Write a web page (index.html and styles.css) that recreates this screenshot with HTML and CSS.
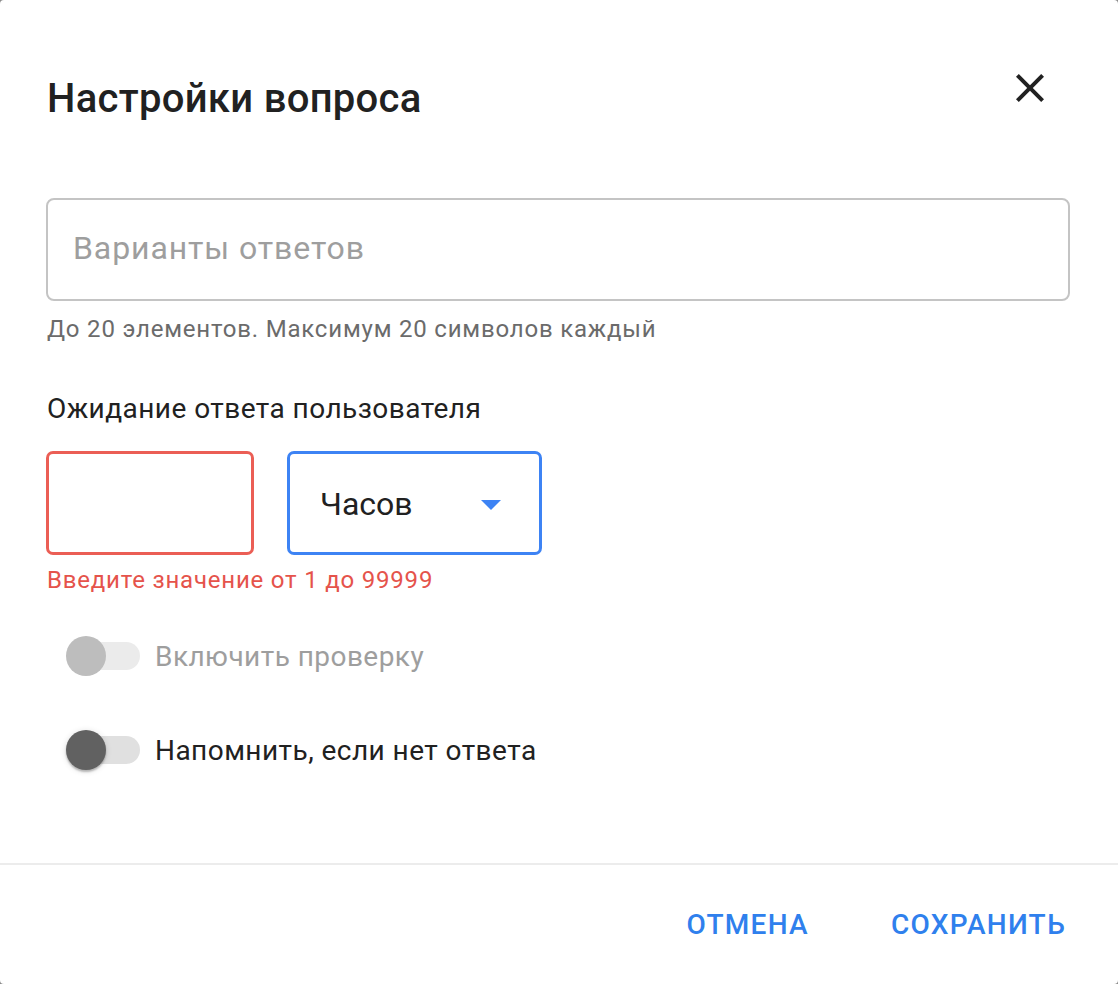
FILE: index.html
```html
<!DOCTYPE html>
<html lang="ru">
<head>
    <meta charset="UTF-8">
    <meta name="viewport" content="width=device-width, initial-scale=1.0">
    <title>Настройки вопроса</title>
    <link rel="stylesheet" href="styles.css">
</head>
<body>
<div class="dialog">
    <div class="dialog-title">
        <h2>Настройки вопроса</h2>
        <button type="button" class="close" aria-label="Закрыть">
            <svg viewBox="0 0 24 24" width="48" height="48">
                <path d="M19 6.41L17.59 5 12 10.59 6.41 5 5 6.41 10.59 12 5 17.59 6.41 19 12 13.41 17.59 19 19 17.59 13.41 12z"/>
            </svg>
        </button>
    </div>

    <div class="dialog-content">
        <div class="answers">
            <input type="text" id="answers" placeholder="Варианты ответов">
        </div>
        <p class="helper">До 20 элементов. Максимум 20 символов каждый</p>

        <p class="group-label">Ожидание ответа пользователя</p>
        <div class="wait-row">
            <div class="field field-error">
                <input type="text" id="waitValue">
            </div>
            <div class="field field-select">
                <span>Часов</span>
                <svg viewBox="0 0 24 24" width="48" height="48"><path d="M7 10l5 5 5-5z"/></svg>
            </div>
        </div>
        <p class="error">Введите значение от 1 до 99999</p>

        <label class="switch-row disabled">
            <span class="switch"><span class="track"></span><span class="thumb"></span></span>
            Включить проверку
        </label>
        <label class="switch-row">
            <span class="switch"><span class="track"></span><span class="thumb"></span></span>
            Напомнить, если нет ответа
        </label>
    </div>

    <div class="dialog-actions">
        <button type="button" class="text-button">Отмена</button>
        <button type="button" class="text-button">Сохранить</button>
    </div>
</div>
</body>
</html>
```

FILE: styles.css
```css
body {
    margin: 0;
    padding: 0;
    background-color: #8a8a8a;
    font-family: Roboto, "Liberation Sans", Arial, sans-serif;
    color: #212121;
}

.dialog {
    width: 1118px;
    height: 984px;
    background-color: #fff;
    border-radius: 4px;
    display: flex;
    flex-direction: column;
    box-sizing: border-box;
}

.dialog-title {
    display: flex;
    justify-content: space-between;
    align-items: flex-start;
    padding: 64px 64px 0 47px;
}

.dialog-title h2 {
    margin: 3px 0 0;
    font-size: 40px;
    line-height: 64px;
    font-weight: 500;
    letter-spacing: 0.3px;
    color: #212121;
}

.close {
    width: 48px;
    height: 48px;
    padding: 0;
    border: none;
    background: none;
    cursor: pointer;
}

.close svg {
    display: block;
    fill: #212121;
}

.dialog-content {
    flex: 1;
    padding: 67px 48px 0 46px;
}

.answers {
    height: 103px;
    border: 2px solid #c4c4c4;
    border-radius: 8px;
    box-sizing: border-box;
    display: flex;
    align-items: center;
    padding: 0 0 4px 25px;
}

.answers input,
.field input {
    border: none;
    outline: none;
    width: 100%;
    font-family: inherit;
    font-size: 32px;
    color: #212121;
    padding: 0;
    background: none;
}

.answers input {
    letter-spacing: 0.9px;
}

.answers input::placeholder {
    color: #9e9e9e;
}

.helper {
    margin: 12px 0 0 1px;
    font-size: 24px;
    line-height: 32px;
    letter-spacing: 0.8px;
    color: #6b6b6b;
}

.group-label {
    margin: 44px 0 0 1px;
    font-size: 28px;
    line-height: 40px;
    letter-spacing: 0.45px;
    color: #212121;
}

.wait-row {
    display: flex;
    gap: 33px;
    margin-top: 22px;
}

.field {
    height: 104px;
    border: 3px solid #c4c4c4;
    border-radius: 7px;
    box-sizing: border-box;
    display: flex;
    align-items: center;
}

.field-error {
    width: 208px;
    border-color: #eb5e55;
    padding-left: 24px;
}

.field-select {
    width: 255px;
    border-color: #3d83f4;
    padding-left: 30px;
    justify-content: space-between;
    font-size: 32px;
    color: #212121;
}

.field-select span {
    margin-top: 2px;
}

.field-select svg {
    fill: #3d83f4;
    margin-right: 24px;
    margin-top: 2px;
}

.error {
    margin: 9px 0 0 1px;
    font-size: 24px;
    line-height: 32px;
    letter-spacing: 0.8px;
    color: #e5534b;
}

.switch-row {
    display: flex;
    align-items: center;
    height: 76px;
    margin-top: 22px;
    font-size: 28px;
    letter-spacing: 0.45px;
    color: #212121;
    cursor: pointer;
}

.switch-row + .switch-row {
    margin-top: 18px;
}

.switch-row.disabled {
    color: #9e9e9e;
    cursor: default;
}

.switch {
    position: relative;
    width: 74px;
    height: 40px;
    margin: 0 15px 0 20px;
    flex-shrink: 0;
}

.track {
    position: absolute;
    left: 6px;
    top: 6px;
    width: 68px;
    height: 28px;
    border-radius: 14px;
    background-color: #e0e0e0;
}

.thumb {
    position: absolute;
    left: 0;
    top: 0;
    width: 40px;
    height: 40px;
    border-radius: 50%;
    background-color: #616161;
    box-shadow: 0 2px 2px rgba(0, 0, 0, 0.24), 0 1px 6px rgba(0, 0, 0, 0.14);
}

.disabled .track {
    background-color: #ebebeb;
}

.disabled .thumb {
    background-color: #bdbdbd;
    box-shadow: none;
}

.dialog-actions {
    border-top: 2px solid #ececec;
    height: 119px;
    display: flex;
    justify-content: flex-end;
    align-items: center;
    gap: 50px;
    padding-right: 36px;
}

.text-button {
    border: none;
    background: none;
    padding: 12px 16px;
    font-family: inherit;
    font-size: 28px;
    font-weight: 500;
    letter-spacing: 1.3px;
    text-transform: uppercase;
    color: #2f80ed;
    cursor: pointer;
}
```
